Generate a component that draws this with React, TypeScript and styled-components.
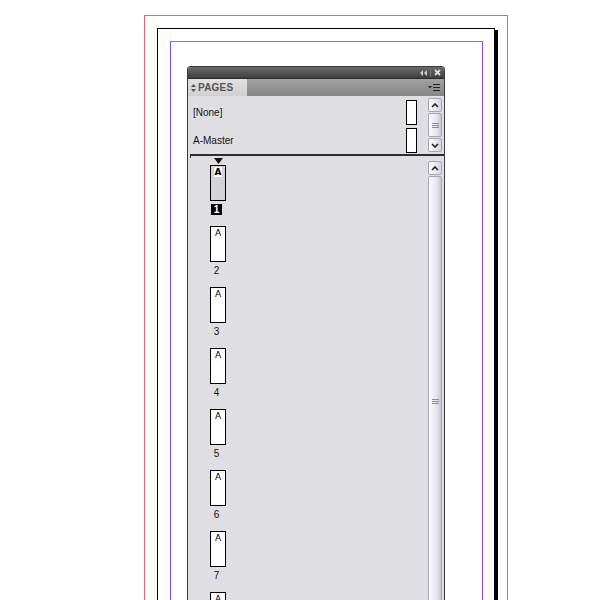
import React, { FC } from 'react';
import styled, { createGlobalStyle } from 'styled-components';

const GlobalStyle = createGlobalStyle`
  html, body {
    margin: 0;
    padding: 0;
    background: #fff;
    overflow: hidden;
  }
`;

const PAGES = [1, 2, 3, 4, 5, 6, 7, 8];

const Stage = styled.div`
  position: relative;
  width: 600px;
  height: 600px;
  overflow: hidden;
  box-sizing: border-box;
  padding: 15px 0 0 144px;
  font-family: 'Liberation Sans', Arial, sans-serif;
`;

const Bleed = styled.div`
  width: 364px;
  height: 700px;
  box-sizing: border-box;
  border: 1px solid #f2606e;
  border-bottom: none;
  padding: 12px 0 0 12px;
`;

const DocPage = styled.div`
  width: 338px;
  height: 700px;
  box-sizing: border-box;
  border: 1px solid #000;
  border-bottom: none;
  box-shadow: 3px 2px 0 #000;
  padding: 12px 0 0 12px;
  background: #fff;
`;

const Margins = styled.div`
  width: 313px;
  height: 700px;
  box-sizing: border-box;
  border: 1px solid #9b3ff2;
  border-top-color: #d44ce6;
  border-bottom: none;
`;

const Panel = styled.div`
  position: absolute;
  left: 187px;
  top: 66px;
  width: 258px;
  height: 560px;
  box-sizing: border-box;
  border: 1px solid #3c3c3c;
  border-bottom: none;
  border-radius: 4px 4px 0 0;
  background: #dfdfe3;
  overflow: hidden;
  display: flex;
  flex-direction: column;
`;

const TitleBar = styled.div`
  flex: none;
  height: 11px;
  background: linear-gradient(#6a6a6a, #3f3f3f);
  display: flex;
  align-items: center;
  justify-content: flex-end;
  gap: 3px;
  padding-right: 3px;
`;

const TitleSep = styled.div`
  width: 1px;
  height: 8px;
  background: #7a7a7a;
`;

const TabRow = styled.div`
  flex: none;
  height: 17px;
  border-top: 1px solid #2a2a2a;
  background: linear-gradient(#a2a2a2, #868686);
  display: flex;
  align-items: stretch;
  justify-content: space-between;
`;

const Tab = styled.div`
  width: 59px;
  background: linear-gradient(#e2e2e2, #cfcfcf);
  display: flex;
  align-items: center;
  gap: 2px;
  padding-left: 3px;
  box-sizing: border-box;
  font-size: 10px;
  font-weight: bold;
  color: #545454;
  letter-spacing: 0.2px;
`;

const MenuButton = styled.div`
  display: flex;
  align-items: center;
  padding-right: 4px;
`;

const Masters = styled.div`
  flex: none;
  height: 58px;
  display: flex;
  padding: 2px 2px 0 5px;
  box-sizing: border-box;
`;

const MasterList = styled.div`
  flex: 1;
  display: flex;
  flex-direction: column;
`;

const MasterRow = styled.div`
  height: 28px;
  display: flex;
  align-items: center;
  justify-content: space-between;
  padding-right: 11px;
  font-size: 10px;
  color: #111;
`;

const MasterThumb = styled.div`
  width: 11px;
  height: 25px;
  box-sizing: border-box;
  border: 1px solid #000;
  background: #fff;
`;

const Scrollbar = styled.div<{ $top?: number }>`
  width: 14px;
  display: flex;
  flex-direction: column;
  gap: 1px;
  padding-top: ${({ $top }) => $top ?? 0}px;
`;

const ScrollButton = styled.div`
  height: 14px;
  flex: none;
  box-sizing: border-box;
  border: 1px solid #a6a6b6;
  border-radius: 2px;
  background: linear-gradient(to right, #fdfdff, #d6d6e0);
  display: flex;
  align-items: center;
  justify-content: center;
`;

const Thumb = styled.div<{ $grow?: boolean }>`
  flex: ${({ $grow }) => ($grow ? 1 : 'none')};
  height: ${({ $grow }) => ($grow ? 'auto' : '24px')};
  box-sizing: border-box;
  border: 1px solid #a6a6b6;
  border-radius: 2px;
  background: linear-gradient(to right, #fbfbfe, #e6e6ee 60%, #c9c9d6);
  display: flex;
  align-items: center;
  justify-content: center;
`;

const Grip = styled.div`
  width: 7px;
  height: 5px;
  background: repeating-linear-gradient(#8a8a9c 0 1px, transparent 1px 2px);
`;

const Divider = styled.div`
  flex: none;
  height: 4px;
  margin: 0 0 0 2px;
  border-top: 2px solid #2e2e2e;
  border-left: 1px solid #2e2e2e;
  box-sizing: border-box;
`;

const PagesArea = styled.div`
  flex: 1;
  min-height: 0;
  overflow: hidden;
  display: flex;
  padding: 0 2px 0 0;
`;

const PageList = styled.div`
  flex: 1;
  display: flex;
  flex-direction: column;
  padding: 0 0 0 22px;
`;

const Spread = styled.div`
  flex: none;
  display: flex;
  flex-direction: column;
  align-items: flex-start;
  margin-bottom: 11px;
`;

const Marker = styled.div`
  width: 16px;
  height: 6px;
  display: flex;
  justify-content: center;
  margin-bottom: 1px;
`;

const PageThumb = styled.div<{ $selected?: boolean }>`
  width: 16px;
  height: 36px;
  box-sizing: border-box;
  border: 1px solid #000;
  background: ${({ $selected }) => ($selected ? '#d3d3d8' : '#fff')};
  display: flex;
  justify-content: center;
  align-items: flex-start;
  padding-top: 1px;
`;

const Letter = styled.span<{ $selected?: boolean }>`
  font-size: 10px;
  line-height: 10px;
  padding: 0 1px;
  font-family: 'DejaVu Sans', sans-serif;
  font-size: 9px;
  font-weight: ${({ $selected }) => ($selected ? 'bold' : 'normal')};
  background: ${({ $selected }) => ($selected ? '#fff' : 'transparent')};
  color: #000;
`;

const PageNumber = styled.div<{ $selected?: boolean }>`
  width: 11px;
  height: 11px;
  margin: 3px 0 0 1px;
  font-size: 10px;
  line-height: 11px;
  text-align: center;
  font-weight: ${({ $selected }) => ($selected ? 'bold' : 'normal')};
  color: ${({ $selected }) => ($selected ? '#fff' : '#111')};
  background: ${({ $selected }) => ($selected ? '#000' : 'transparent')};
`;

const Chevron: FC<{ down?: boolean }> = ({ down }) => (
  <svg width="8" height="5" viewBox="0 0 8 5">
    <path
      d={down ? 'M1 1 L4 4 L7 1' : 'M1 4 L4 1 L7 4'}
      fill="none"
      stroke="#222"
      strokeWidth="1.6"
    />
  </svg>
);

const PageItem: FC<{ n: number }> = ({ n }) => {
  const selected = n === 1;
  return (
    <Spread>
      {selected && (
        <Marker>
          <svg width="9" height="6" viewBox="0 0 9 6">
            <path d="M0 0 H9 L4.5 6 Z" fill="#111" />
          </svg>
        </Marker>
      )}
      <PageThumb $selected={selected}>
        <Letter $selected={selected}>A</Letter>
      </PageThumb>
      <PageNumber $selected={selected}>{n}</PageNumber>
    </Spread>
  );
};

export default function App() {
  return (
    <Stage>
      <GlobalStyle />
      <Bleed>
        <DocPage>
          <Margins />
        </DocPage>
      </Bleed>

      <Panel>
        <TitleBar>
          <svg width="7" height="6" viewBox="0 0 7 6">
            <path d="M3 0 L0 3 L3 6 Z M7 0 L4 3 L7 6 Z" fill="#cfcfcf" />
          </svg>
          <TitleSep />
          <svg width="7" height="7" viewBox="0 0 7 7">
            <path d="M1 1 L6 6 M6 1 L1 6" stroke="#e0e0e0" strokeWidth="1.8" />
          </svg>
        </TitleBar>

        <TabRow>
          <Tab>
            <svg width="5" height="8" viewBox="0 0 5 8">
              <path d="M2.5 0 L5 3 H0 Z M2.5 8 L5 5 H0 Z" fill="#545454" />
            </svg>
            PAGES
          </Tab>
          <MenuButton>
            <svg width="12" height="9" viewBox="0 0 12 9">
              <path d="M0 3 H4 L2 5.5 Z" fill="#222" />
              <path d="M5 1.5 H12 M5 4.5 H12 M5 7.5 H12" stroke="#222" strokeWidth="1" />
            </svg>
          </MenuButton>
        </TabRow>

        <Masters>
          <MasterList>
            <MasterRow>
              [None]
              <MasterThumb />
            </MasterRow>
            <MasterRow>
              A-Master
              <MasterThumb />
            </MasterRow>
          </MasterList>
          <Scrollbar>
            <ScrollButton>
              <Chevron />
            </ScrollButton>
            <Thumb>
              <Grip />
            </Thumb>
            <ScrollButton>
              <Chevron down />
            </ScrollButton>
          </Scrollbar>
        </Masters>

        <Divider />

        <PagesArea>
          <PageList>
            {PAGES.map((n) => (
              <PageItem key={n} n={n} />
            ))}
          </PageList>
          <Scrollbar $top={3}>
            <ScrollButton>
              <Chevron />
            </ScrollButton>
            <Thumb $grow>
              <Grip />
            </Thumb>
          </Scrollbar>
        </PagesArea>
      </Panel>
    </Stage>
  );
}
